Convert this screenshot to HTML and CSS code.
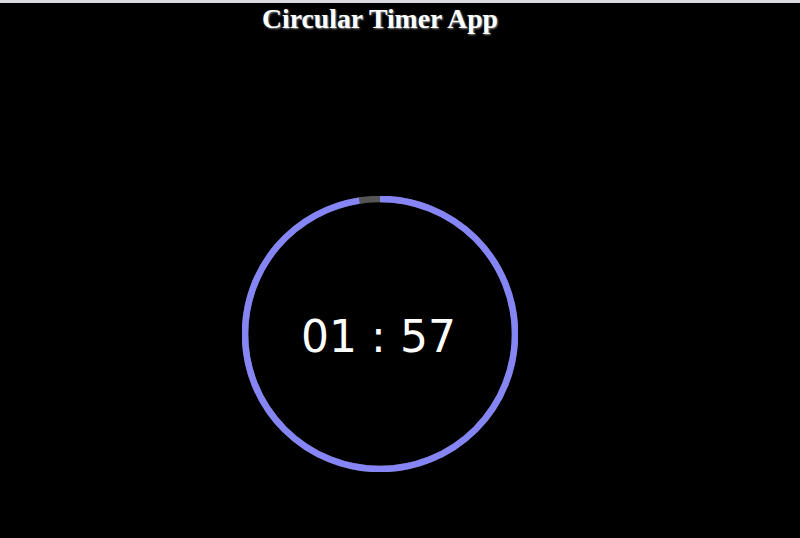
FILE: index.html
```html
<!DOCTYPE html>
<html lang="en">
<head>
<meta charset="utf-8">
<title>Circular Timer App</title>
<link rel="stylesheet" href="styles.css">
</head>
<body>
  <main class="app">
    <h1 class="app-title">Circular Timer App</h1>
    <div class="timer">
      <svg class="timer-ring" width="276" height="276" viewBox="0 0 276 276">
        <circle class="ring-track" cx="138" cy="138" r="135"></circle>
        <!-- 117 of 120 seconds left: dash = 848.23 * 0.975 -->
        <circle class="ring-progress" cx="138" cy="138" r="135"
                stroke-dasharray="827.02 848.23" transform="rotate(-90 138 138)"></circle>
      </svg>
      <div class="timer-readout">01 : 57</div>
    </div>
  </main>
</body>
</html>
```

FILE: styles.css
```css
html, body {
  margin: 0;
  padding: 0;
  background: #000;
}

body {
  border-top: 3px solid #d9d9de;
  height: 535px;
  overflow: hidden;
}

.app {
  width: 760px;
  display: flex;
  flex-direction: column;
  align-items: center;
}

.app-title {
  margin: 0;
  font-family: "Liberation Serif", "Times New Roman", serif;
  font-weight: bold;
  font-size: 27.7px;
  line-height: 31px;
  color: #fff;
  text-shadow: 1px 1px 2px #8a8a8a;
}

.timer {
  margin-top: 162px;
  display: grid;
  place-items: center;
}

.timer-ring,
.timer-readout {
  grid-area: 1 / 1;
}

.ring-track {
  fill: none;
  stroke: #555;
  stroke-width: 6.5;
}

.ring-progress {
  fill: none;
  stroke: #8585f5;
  stroke-width: 6.5;
}

.timer-readout {
  font-family: "DejaVu Sans", Verdana, sans-serif;
  font-size: 44px;
  color: #fff;
  margin-top: 4px;
  margin-left: -3px;
}
```
